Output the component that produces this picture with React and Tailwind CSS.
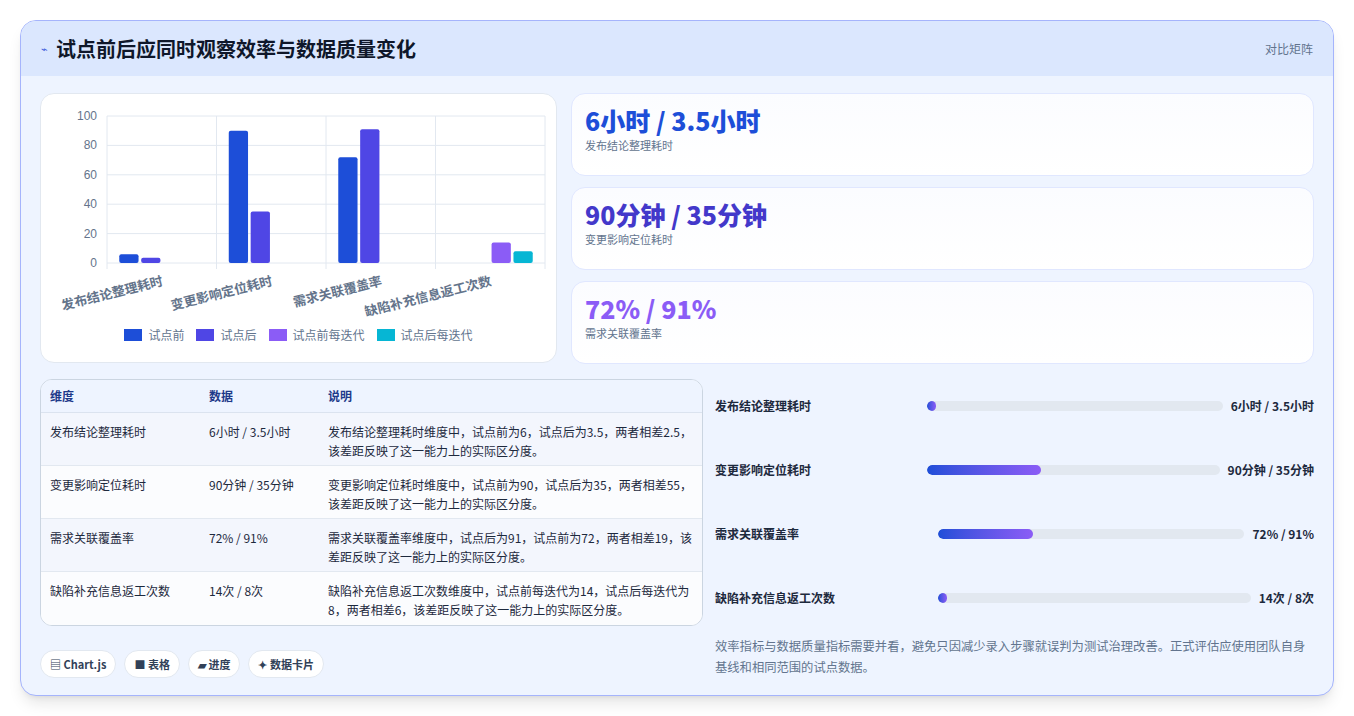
import React from "react";

const F = { fontFamily: '"Noto Sans CJK SC", "Noto Sans", sans-serif' };

function Chart() {
  const x0 = 66, x1 = 504, y0 = 22, y1 = 169;
  const cw = (x1 - x0) / 4;
  const yv = (v) => y1 - (v / 100) * (y1 - y0);
  const colors = ["#1d4ed8", "#4f46e5", "#8b5cf6", "#06b6d4"];
  const data = [
    [6, 3.5, null, null],
    [90, 35, null, null],
    [72, 91, null, null],
    [null, null, 14, 8],
  ];
  const labels = ["发布结论整理耗时", "变更影响定位耗时", "需求关联覆盖率", "缺陷补充信息返工次数"];
  const slot = (cw * 0.8) / 4;
  const bw = slot * 0.88;
  return (
    <svg width="516" height="230" style={F}>
      {[0, 20, 40, 60, 80, 100].map((v) => (
        <g key={v}>
          <line x1={x0} x2={x1} y1={yv(v)} y2={yv(v)} stroke="#e2e8f0" />
          <text x={x0 - 10} y={yv(v) + 4} textAnchor="end" fontSize="12" fill="#64748b" fontFamily="Liberation Sans, sans-serif">{v}</text>
        </g>
      ))}
      {[0, 1, 2, 3, 4].map((i) => (
        <line key={i} x1={x0 + i * cw} x2={x0 + i * cw} y1={y0} y2={y1 + 6} stroke="#e2e8f0" />
      ))}
      {data.map((row, c) =>
        row.map((v, d) => {
          if (v == null) return null;
          const cx = x0 + c * cw + cw / 2 - 1.5 * slot + d * slot - slot / 2 + (slot - bw) / 2;
          const h = y1 - yv(v);
          return <rect key={c + "-" + d} x={cx} y={yv(v)} width={bw} height={h} rx="2" fill={colors[d]} />;
        })
      )}
      {labels.map((l, c) => {
        const ax = x0 + c * cw + cw / 2 + 2;
        const ay = y1 + 22;
        return (
          <text key={l} x={ax} y={ay} textAnchor="end" fontSize="13" fontWeight="700" fill="#64748b" transform={`rotate(-14 ${ax} ${ay})`}>{l}</text>
        );
      })}
    </svg>
  );
}

function Bar({ label, value, pct, lw }) {
  return (
    <div className="flex items-center h-[64px]">
      <div className={"text-[12px] font-semibold text-slate-800 shrink-0 " + lw}>{label}</div>
      <div className="flex-1 h-[10px] rounded-full bg-[#e2e8f0] overflow-hidden">
        <div className="h-full rounded-full bg-gradient-to-r from-[#1d4ed8] to-[#8b5cf6]" style={{ width: pct }} />
      </div>
      <div className="ml-2 text-[12px] font-bold text-slate-800 shrink-0">{value}</div>
    </div>
  );
}

export default function App() {
  const rows = [
    ["发布结论整理耗时", "6小时 / 3.5小时", "发布结论整理耗时维度中，试点前为6，试点后为3.5，两者相差2.5，该差距反映了这一能力上的实际区分度。"],
    ["变更影响定位耗时", "90分钟 / 35分钟", "变更影响定位耗时维度中，试点前为90，试点后为35，两者相差55，该差距反映了这一能力上的实际区分度。"],
    ["需求关联覆盖率", "72% / 91%", "需求关联覆盖率维度中，试点后为91，试点前为72，两者相差19，该差距反映了这一能力上的实际区分度。"],
    ["缺陷补充信息返工次数", "14次 / 8次", "缺陷补充信息返工次数维度中，试点前每迭代为14，试点后每迭代为8，两者相差6，该差距反映了这一能力上的实际区分度。"],
  ];
  return (
    <div className="w-[1354px] h-[716px] bg-white pt-[20px] pl-[20px]" style={F}>
      <div className="w-[1314px] h-[676px] rounded-[16px] border border-[#a5b4fc] bg-[#eef4ff] overflow-hidden shadow-lg">
        <div className="h-[55px] bg-[#dbe7fe] flex items-center justify-between px-[20px]">
          <div className="flex items-center gap-[8px]">
            <span className="text-[#3b5bdb] text-[11px]">⌁</span>
            <span className="text-[20px] font-bold text-[#0f172a]">试点前后应同时观察效率与数据质量变化</span>
          </div>
          <span className="text-[12px] text-slate-500">对比矩阵</span>
        </div>
        <div className="px-[19px] pt-[17px]">
          <div className="flex gap-[14px]">
            <div className="w-[517px] h-[270px] rounded-[14px] bg-white border border-[#e2e8f0] flex flex-col">
              <Chart />
              <div className="flex justify-center gap-[12px] text-[12px] text-slate-500 mt-[2px]">
                {[["试点前", "bg-[#1d4ed8]"], ["试点后", "bg-[#4f46e5]"], ["试点前每迭代", "bg-[#8b5cf6]"], ["试点后每迭代", "bg-[#06b6d4]"]].map(([t, c]) => (
                  <div key={t} className="flex items-center gap-[6px]"><span className={"w-[18px] h-[12px] " + c} />{t}</div>
                ))}
              </div>
            </div>
            <div className="flex-1 flex flex-col gap-[11px]">
              {[["6小时 / 3.5小时", "发布结论整理耗时", "text-[#1d4ed8]"], ["90分钟 / 35分钟", "变更影响定位耗时", "text-[#4338ca]"], ["72% / 91%", "需求关联覆盖率", "text-[#8b5cf6]"]].map(([v, l, c]) => (
                <div key={l} className="h-[83px] rounded-[14px] bg-gradient-to-b from-[#fbfcff] to-white border border-[#e0e7ff] px-[13px] pt-[9px]">
                  <div className={"text-[25px] font-extrabold leading-[34px] " + c}>{v}</div>
                  <div className="text-[11px] text-slate-500">{l}</div>
                </div>
              ))}
            </div>
          </div>
          <div className="flex gap-[12px] mt-[15px]">
            <div className="w-[663px]">
              <div className="rounded-[12px] border border-[#cbd5e1] overflow-hidden bg-white">
                <div className="flex h-[33px] items-center bg-[#eef4ff] text-[12px] font-bold text-[#1e3a8a] border-b border-[#dbe3ef]">
                  <div className="w-[168px] pl-[9px]">维度</div>
                  <div className="w-[119px]">数据</div>
                  <div>说明</div>
                </div>
                {rows.map((r, i) => (
                  <div key={i} className={"flex h-[53px] pt-[9px] text-[12px] text-slate-800 leading-[19px] " + (i % 2 === 0 ? "bg-[#f3f6fd]" : "bg-[#fbfcfe]") + (i < 3 ? " border-b border-[#e2e8f0]" : "")}>
                    <div className="w-[168px] pl-[9px]">{r[0]}</div>
                    <div className="w-[119px]">{r[1]}</div>
                    <div className="flex-1 pr-[8px]">{r[2]}</div>
                  </div>
                ))}
              </div>
              <div className="flex gap-[8px] mt-[24px]">
                {["▤ Chart.js", "■ 表格", "▰ 进度", "✦ 数据卡片"].map((t) => (
                  <span key={t} className="h-[28px] px-[9px] rounded-full bg-white border border-[#e2e8f0] text-[11px] font-semibold text-slate-700 flex items-center">{t}</span>
                ))}
              </div>
            </div>
            <div className="flex-1">
              <div className="-mt-[5px]">
                <Bar label="发布结论整理耗时" value="6小时 / 3.5小时" pct="3%" lw="w-[212px]" />
                <Bar label="变更影响定位耗时" value="90分钟 / 35分钟" pct="39%" lw="w-[212px]" />
                <Bar label="需求关联覆盖率" value="72% / 91%" pct="31%" lw="w-[223px]" />
                <Bar label="缺陷补充信息返工次数" value="14次 / 8次" pct="3%" lw="w-[223px]" />
              </div>
              <p className="mt-[6px] text-[12.3px] leading-[21px] text-slate-500">效率指标与数据质量指标需要并看，避免只因减少录入步骤就误判为测试治理改善。正式评估应使用团队自身基线和相同范围的试点数据。</p>
            </div>
          </div>
        </div>
      </div>
    </div>
  );
}
